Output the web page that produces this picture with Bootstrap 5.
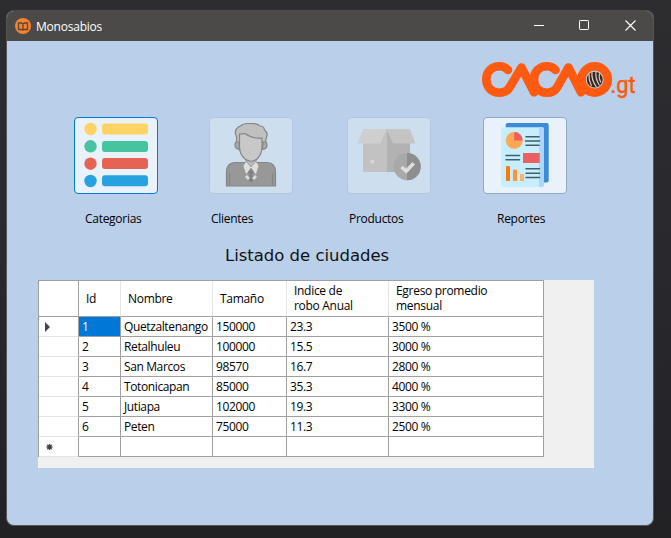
<!DOCTYPE html>
<html lang="es">
<head>
<meta charset="utf-8">
<title>Monosabios</title>
<link rel="stylesheet" href="https://cdn.jsdelivr.net/npm/bootstrap@5.3.0/dist/css/bootstrap.min.css">
<style>
body{background:linear-gradient(#2d2d30,#29292b 50%,#222224);height:538px;padding:10px 17px 12px 6px;font:12px/15px "Open Sans","Noto Sans",sans-serif;color:#000;letter-spacing:-.38px}
.window{height:516px;border:1px solid #55565a;border-top-color:#4c4a48;border-radius:8px;background:#bad0ea}
.titlebar{height:30px;background:#4c4a48;color:#fff;padding-left:8px;font-size:12px;letter-spacing:-.22px}
.titlebar .win-btn{width:46px;height:30px;position:relative;left:1px}
.titlebar .app-name{margin-left:5px}
.logo-row{height:76px;padding:20px 15px 0 0}
.tools{padding-left:67px;height:111px}
.tool{width:84px}
.tool:nth-child(1){margin-right:51px}
.tool:nth-child(2){margin-right:54px}
.tool:nth-child(3){margin-right:52px}
.tool .btn{width:84px;height:77px;background:#e9f1fa;border:1px solid #91a7c2;border-radius:4px}
.tool .btn.current{border-color:#0078d7}
.tool .btn:disabled{background:#cddeee;border-color:#b0c7de;opacity:1}
.tool .caption-text{margin-top:17px;white-space:nowrap;letter-spacing:-.28px}
.c1{padding-left:11px}.c2{padding-left:2px}.c3{padding-left:2px}.c4{padding-left:14px}
.heading{font:16.5px/24px "DejaVu Sans",Verdana,sans-serif;letter-spacing:-.02px;padding-left:218px;height:52px;padding-top:16px;margin:0;color:#111}
.grid-area{width:556px;height:188px;margin-left:31px;background:#f0f0f0}
.data-grid{width:506px;table-layout:fixed;border-collapse:separate;border-spacing:0;background:#fff;border-left:1px solid #a0a0a0;border-top:1px solid #a0a0a0;line-height:15px}
.data-grid td,.data-grid th{height:20px;padding:0 0 1px 3px;border-right:1px solid #a0a0a0;border-bottom:1px solid #a0a0a0;font-weight:400;white-space:nowrap;vertical-align:middle}
.data-grid thead th{height:36px;padding:0 0 1px 7px;border-right-color:#e5e5e5;letter-spacing:-.3px}
.data-grid thead th:first-child,.data-grid thead th:last-child{border-right-color:#a0a0a0}
.data-grid tbody td:first-child{border-bottom-color:#e5e5e5;padding:0 0 0 5px;line-height:0}
.data-grid td.selected{background:#0078d7;color:#fff}
</style>
<script src="https://cdn.jsdelivr.net/npm/bootstrap@5.3.0/dist/js/bootstrap.bundle.min.js"></script>
</head>
<body class="overflow-hidden">
<main class="window overflow-hidden">
  <header class="titlebar d-flex align-items-center">
    <svg width="16" height="16" viewBox="0 0 16 16"><circle cx="8" cy="8" r="8" fill="#f5822d"/><path d="M3.500 5h3L8 6l1.500-1h3v6.500h-3L8 12l-1.500-.5h-3zM8 6v6" fill="none" stroke="#5a4638" stroke-width="1.300"/></svg>
    <span class="app-name me-auto">Monosabios</span>
    <svg class="win-btn" viewBox="0 0 46 30"><path d="M18 14.500h10" stroke="#fff"/></svg>
    <svg class="win-btn" viewBox="0 0 46 30"><rect x="17.500" y="9.500" width="9" height="9" rx=".7" fill="none" stroke="#fff"/></svg>
    <svg class="win-btn" viewBox="0 0 46 30"><path d="M17.500 9.500l10 10m0-10l-10 10" stroke="#fff" stroke-width="1.100"/></svg>
  </header>
  <div class="logo-row d-flex justify-content-end align-items-start">
    <svg width="156" height="40" viewBox="482 61 156 40">
      <g fill="none" stroke="#ff5a0f" stroke-width="8.600" stroke-linecap="round" stroke-linejoin="round">
        <path d="M508 70Q504.500 66.300 499.500 66.300C491.500 66.300 486.300 72 486.300 79.500S491.500 92.700 499.500 92.700Q506.500 92.700 509.500 87.500L521.500 67.500L534 92.300"/>
        <path d="M555.500 70Q552 66.300 547 66.300C539 66.300 534 72 534 79.500S539 92.700 547 92.700Q554 92.700 557 87.500L568.500 67.500L581 92.300"/>
        <circle cx="594.700" cy="79.500" r="13.200"/>
      </g>
      <circle cx="594.700" cy="79.700" r="8.600" fill="#c5cbd2"/>
      <circle cx="594.700" cy="79.700" r="7.900" fill="#452414"/>
      <path d="M589 74q-.5 6 2.500 12M592 71.500q-1 8 4.500 15.500M596 71.500q-1 7 3.500 14M599.500 73.500q-1 5 1.500 9" fill="none" stroke="#c9d1da" stroke-width="1.200"/>
      <text x="610.500" y="92.500" font-family="Roboto,sans-serif" font-size="24" letter-spacing="0" textLength="25" lengthAdjust="spacingAndGlyphs" fill="#ff5a0f" stroke="#ff5a0f" stroke-width=".5">.gt</text>
    </svg>
  </div>
  <nav class="tools d-flex">
    <div class="tool">
      <button class="btn current p-0 d-block" aria-label="Categorias"><svg class="d-block" width="82" height="75" viewBox="75 118 82 75">
        <g fill="#ffd464"><circle cx="90.500" cy="129" r="6.200"/><rect x="102" y="123.500" width="46" height="11" rx="3"/></g>
        <g fill="#46c4a0"><circle cx="90.500" cy="146.300" r="6.200"/><rect x="102" y="141" width="46" height="11" rx="3"/></g>
        <g fill="#e56353"><circle cx="90.500" cy="163.700" r="6.200"/><rect x="102" y="158" width="46" height="11" rx="3"/></g>
        <g fill="#28a2de"><circle cx="90.500" cy="181" r="6.200"/><rect x="102" y="175.300" width="46" height="11" rx="3"/></g>
      </svg></button>
      <div class="caption-text c1">Categorias</div>
    </div>
    <div class="tool">
      <button class="btn p-0 d-block" disabled aria-label="Clientes"><svg class="d-block" width="82" height="75" viewBox="210 118 82 75" stroke="#858585" stroke-width="1.200" stroke-linejoin="round">
        <path d="M226.500 186V172Q226.500 163 235 162.500H267Q275.500 163 275.500 172V186z" fill="#989898"/>
        <path d="M229.500 173v12M272.500 173v12" fill="none"/>
        <path d="M245 157h12v6l-6 7-6-7z" fill="#bbb" stroke="none"/>
        <path d="M246 161l-3 5 3 9 5-7 5 7 3-9-3-5-5 6z" fill="#dedede" stroke="#999" stroke-width=".8"/>
        <path d="M248.500 172l2.500-3 2.500 3-1.500 3 2 4-3 3.500-3-3.500 2-4z" fill="#808080" stroke-width=".5"/>
        <path d="M247 175l3 3-2 2-3-3zM255 175l-3 3 2 2 3-3z" fill="#ddd" stroke="none"/>
        <path d="M239 141q-4 0-4 4t4.500 4.500zM263 141q4 0 4 4t-4.500 4.500z" fill="#aaa"/>
        <path d="M236.500 142V136Q234 132 236.500 129Q238 126.500 240.500 126Q243 123.500 248 123.500H253Q258 123.500 260 126Q264 126 264.500 130Q268.500 133 266.500 137L265.500 142z" fill="#c0c0c0"/>
        <path d="M239.500 141V134Q243 134 245 133.500Q252 139 262 138V147Q262 154 257 159Q251 163.500 245 159Q239.500 154 239.500 147z" fill="#c8c8c8"/>
      </svg></button>
      <div class="caption-text c2">Clientes</div>
    </div>
    <div class="tool">
      <button class="btn p-0 d-block" disabled aria-label="Productos"><svg class="d-block" width="82" height="75" viewBox="348 118 82 75">
        <path d="M363 129.500h23.500V172H363z" fill="#c2c2c2"/><path d="M386.500 129.500H410V172h-23.500z" fill="#b2b2b2"/>
        <path d="M363 129.500h23.500l-6 14H357.500z" fill="#cfcfcf"/><path d="M386.500 129.500H410l5.500 14h-22.500z" fill="#c4c4c4"/>
        <rect x="370.500" y="160" width="4" height="3.500" fill="#d6d6d6"/>
        <circle cx="407.300" cy="166.700" r="13.600" fill="#a9a9a9"/><path d="M407 153.100A13.600 13.600 0 0 1 407 180.300z" fill="#8e8e8e"/>
        <path d="M401.500 167l4.700 4.200 7.500-8" fill="none" stroke="#dedede" stroke-width="3.500"/>
      </svg></button>
      <div class="caption-text c3">Productos</div>
    </div>
    <div class="tool">
      <button class="btn p-0 d-block" aria-label="Reportes"><svg class="d-block" width="82" height="75" viewBox="484 118 82 75">
        <rect x="505.700" y="123" width="43" height="59.500" rx="2" fill="#3b8bd8"/>
        <rect x="501" y="127.300" width="43" height="59.700" rx="2" fill="#c7eefe"/><path d="M539 127.300h3q2 0 2 2V185q0 2-2 2h-3z" fill="#afd5fb"/>
        <circle cx="514.200" cy="140.500" r="8.500" fill="#ffa956"/><path d="M514.200 140.500v-8.500a8.500 8.500 0 0 1 8.500 8.500z" fill="#ec5f60"/>
        <rect x="523" y="153" width="16.700" height="10" fill="#ec5f60"/>
        <path d="M526 136.700h13M525.500 141h14M526 145.300h13M506 155.500h13.500M506 159.800h13.500M526 168.800h13.500M526 173.200h13.500M526 177.500h13.500" stroke="#405f66" stroke-width="1.500" stroke-linecap="round"/>
        <rect x="506" y="166" width="4" height="15" rx="1" fill="#ff7800"/><rect x="513" y="169.500" width="4" height="11.500" rx=".6" fill="#ff9737"/><rect x="520" y="174" width="4" height="7" rx=".6" fill="#ffaf61"/>
      </svg></button>
      <div class="caption-text c4">Reportes</div>
    </div>
  </nav>
  <h1 class="heading">Listado de ciudades</h1>
  <div class="grid-area">
    <table class="data-grid">
      <colgroup><col style="width:40px"><col style="width:42px"><col style="width:92px"><col style="width:74px"><col style="width:102px"><col style="width:155px"></colgroup>
      <thead><tr><th></th><th>Id</th><th>Nombre</th><th>Tamaño</th><th>Indice de<br>robo Anual</th><th>Egreso promedio<br>mensual</th></tr></thead>
      <tbody>
        <tr><td><svg width="7" height="10" viewBox="0 0 7 10"><path d="M1 0l5 5-5 5z" fill="#444"/></svg></td><td class="selected">1</td><td>Quetzaltenango</td><td>150000</td><td>23.3</td><td>3500 %</td></tr>
        <tr><td></td><td>2</td><td>Retalhuleu</td><td>100000</td><td>15.5</td><td>3000 %</td></tr>
        <tr><td></td><td>3</td><td>San Marcos</td><td>98570</td><td>16.7</td><td>2800 %</td></tr>
        <tr><td></td><td>4</td><td>Totonicapan</td><td>85000</td><td>35.3</td><td>4000 %</td></tr>
        <tr><td></td><td>5</td><td>Jutiapa</td><td>102000</td><td>19.3</td><td>3300 %</td></tr>
        <tr><td></td><td>6</td><td>Peten</td><td>75000</td><td>11.3</td><td>2500 %</td></tr>
        <tr><td><svg width="11" height="8" viewBox="0 0 11 8"><path d="M5.500 1v6M2.500 4h6M3.300 1.800l4.400 4.400m0-4.400L3.300 6.200" stroke="#444" stroke-width="1.300"/></svg></td><td></td><td></td><td></td><td></td><td></td></tr>
      </tbody>
    </table>
  </div>
</main>
</body>
</html>
